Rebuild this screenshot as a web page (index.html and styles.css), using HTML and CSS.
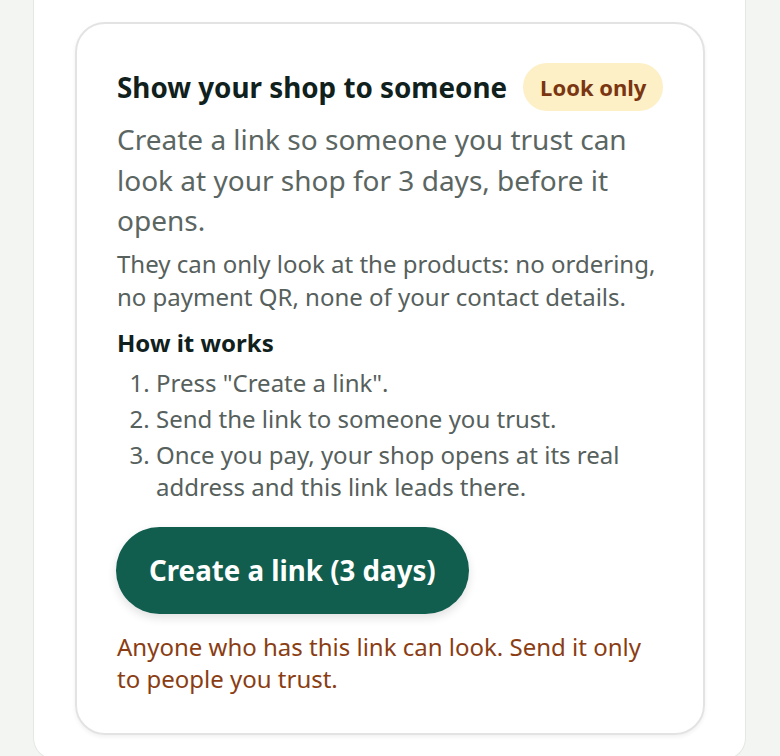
FILE: index.html
```html
<!DOCTYPE html>
<html lang="en">
<head>
    <meta charset="UTF-8">
    <meta name="viewport" content="width=device-width, initial-scale=1.0">
    <title>Show your shop</title>
    <link rel="stylesheet" href="styles.css">
</head>

<body>
    <div class="panel">
        <!-- Preview link card -->
        <section class="card">
            <div class="card-head">
                <h2>Show your shop to someone</h2>
                <span class="badge">Look only</span>
            </div>

            <p class="lead">Create a link so someone you trust can look at your shop for 3 days, before it opens.</p>
            <p class="note">They can only look at the products: no ordering, no payment QR, none of your contact details.</p>

            <h3>How it works</h3>
            <ol class="steps">
                <li>Press "Create a link".</li>
                <li>Send the link to someone you trust.</li>
                <li>Once you pay, your shop opens at its real address and this link leads there.</li>
            </ol>

            <button type="button" class="create-btn">Create a link (3 days)</button>

            <p class="warning">Anyone who has this link can look. Send it only to people you trust.</p>
        </section>
    </div>
</body>

</html>
```

FILE: styles.css
```css
/* Page background */
body {
    font-family: "Noto Sans", "Open Sans", sans-serif;
    background-color: #f3f5f2;
    margin: 0;
}

.panel {
    background-color: white;
    margin: 0 34px 0 33px;
    padding: 22px 40px 24px 41px;
    border: 1px solid #e4e7e3;
    border-top: none;
    border-radius: 0 0 22px 22px;
}

/* The card itself */
.card {
    border: 2px solid #e2e3e2;
    border-radius: 30px;
    padding: 39px 40px 38px 40px;
    box-shadow: 0 2px 4px rgba(0, 0, 0, 0.06);
}

.card-head {
    display: flex;
    align-items: center;
    gap: 16px;
    white-space: nowrap;
}

h2 {
    margin: 0;
    font-size: 27.8px;
    font-weight: 700;
    color: #10211d;
}

.badge {
    flex: none;
    background-color: #fdf0c6;
    color: #7a3511;
    font-size: 22px;
    line-height: 30px;
    font-weight: 700;
    padding: 9px 17px;
    border-radius: 24px;
}

.lead {
    margin: 8px 0 6px;
    font-size: 28px;
    line-height: 40.5px;
    color: #5b6662;
}

.note {
    margin: 0 0 13px;
    font-size: 24px;
    line-height: 33px;
    color: #56605c;
}

h3 {
    margin: 0 0 8px;
    font-size: 24px;
    line-height: 33px;
    font-weight: 700;
    color: #10211d;
}

.steps {
    margin: 0 0 24px;
    padding-left: 39px;
    font-size: 24px;
    line-height: 32px;
    color: #56605c;
}

.steps li {
    margin-bottom: 4px;
}

.steps li:last-child {
    margin-bottom: 0;
}

/* Main action */
.create-btn {
    display: block;
    font-family: inherit;
    font-size: 27.7px;
    font-weight: 700;
    color: white;
    background-color: #115e4f;
    border: none;
    border-radius: 44px;
    padding: 0 33px;
    height: 87px;
    margin-left: -1px;
    box-shadow: 0 4px 10px rgba(0, 0, 0, 0.12);
    cursor: pointer;
}

.warning {
    margin: 17px 0 0;
    font-size: 24px;
    line-height: 32px;
    color: #8a3d13;
}
```
